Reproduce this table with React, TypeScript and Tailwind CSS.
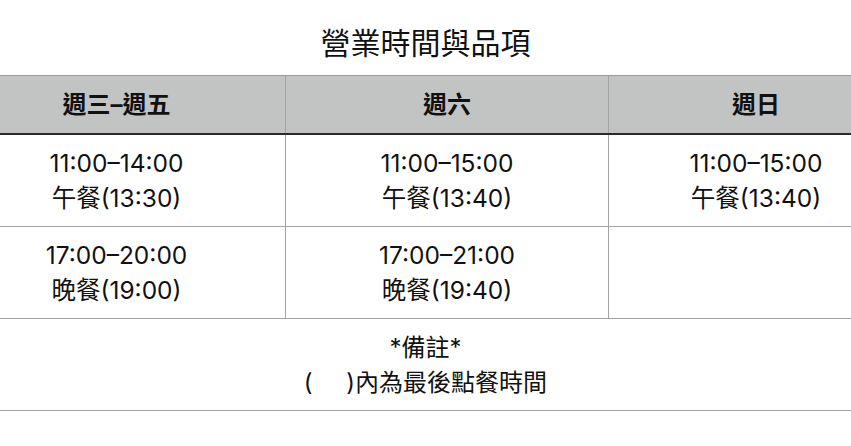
import React from "react";

const font = { fontFamily: '"Inter", "Noto Sans CJK TC", sans-serif' };

function Cell({ lines, last }: { lines: string[]; last?: boolean }) {
  return (
    <div
      className={`h-[92px] flex flex-col items-center justify-center border-b border-[#a3a3a3] ${
        last ? "" : "border-r"
      } text-[24.5px] leading-[35px] text-[#111]`}
    >
      {lines.map((l, i) => (
        <div key={i}>{l}</div>
      ))}
    </div>
  );
}

export default function App() {
  return (
    <div className="w-[851px] h-[446px] overflow-hidden bg-white" style={font}>
      <div className="h-[75px] flex items-center justify-center pt-[12px] text-[30px] text-[#111]">
        營業時間與品項
      </div>
      <div className="ml-[-52px] w-[955px]">
        <div className="grid grid-cols-[338px_323px_294px] bg-[#c2c4c3] border-t border-[#9a9a9a] border-b-2 border-b-[#2a2a2a] h-[60px]">
          <div className="flex items-center justify-center border-r border-[#a3a3a3] text-[24px] font-bold text-[#111]">週三–週五</div>
          <div className="flex items-center justify-center border-r border-[#a3a3a3] text-[24px] font-bold text-[#111]">週六</div>
          <div className="flex items-center justify-center text-[24px] font-bold text-[#111]">週日</div>
        </div>
        <div className="grid grid-cols-[338px_323px_294px]">
          <Cell lines={["11:00–14:00", "午餐(13:30)"]} />
          <Cell lines={["11:00–15:00", "午餐(13:40)"]} />
          <Cell lines={["11:00–15:00", "午餐(13:40)"]} last />
          <Cell lines={["17:00–20:00", "晚餐(19:00)"]} />
          <Cell lines={["17:00–21:00", "晚餐(19:40)"]} />
          <Cell lines={[]} last />
        </div>
        <div className="h-[92px] flex flex-col items-center justify-center border-b border-[#a3a3a3] text-[24px] leading-[35px] text-[#111]">
          <div>*備註*</div>
          <div className="whitespace-pre">(     )內為最後點餐時間</div>
        </div>
      </div>
    </div>
  );
}
